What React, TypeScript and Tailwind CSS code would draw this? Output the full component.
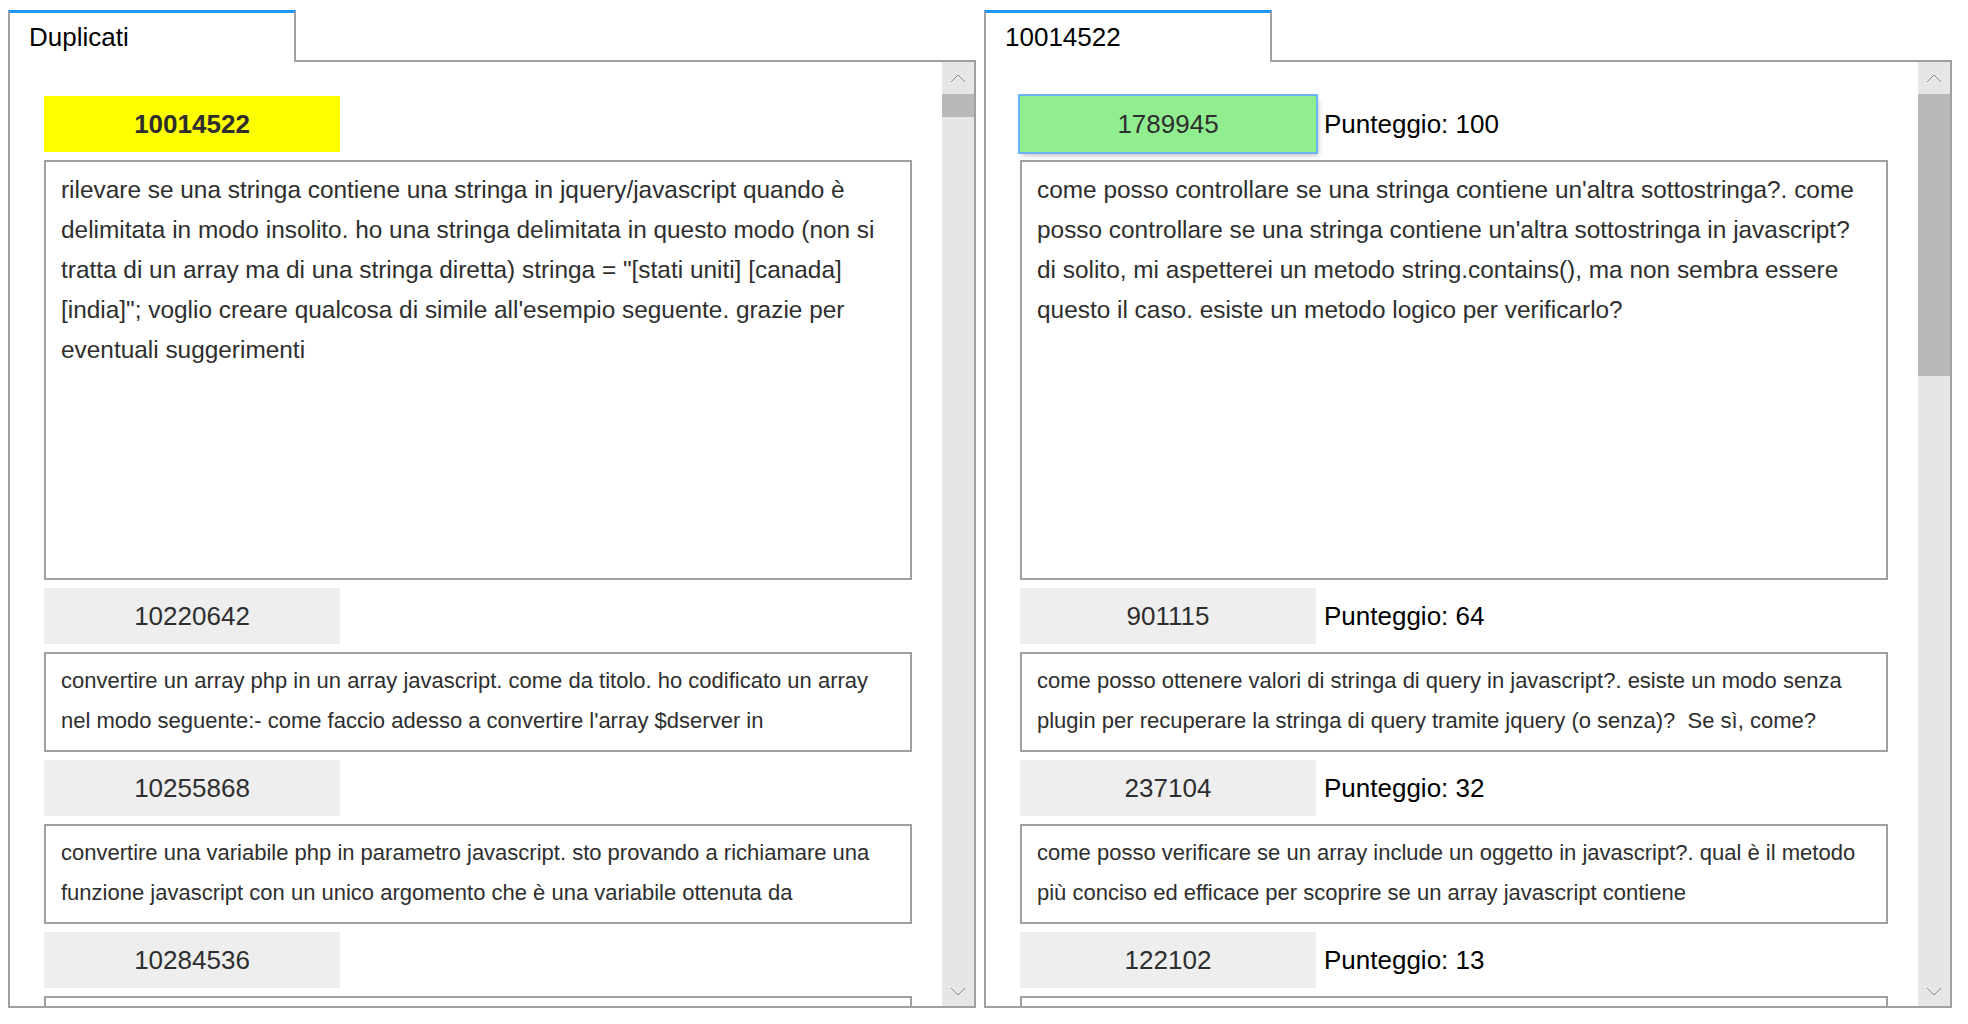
import React from "react";

type Item = {
  id: string;
  score?: number;
  lines: string[];
  big?: boolean;
  kind?: "yellow" | "green" | "plain";
};

const leftItems: Item[] = [
  {
    id: "10014522",
    kind: "yellow",
    big: true,
    lines: [
      "rilevare se una stringa contiene una stringa in jquery/javascript quando è",
      "delimitata in modo insolito. ho una stringa delimitata in questo modo (non si",
      'tratta di un array ma di una stringa diretta) stringa = "[stati uniti] [canada]',
      '[india]"; voglio creare qualcosa di simile all\'esempio seguente. grazie per',
      "eventuali suggerimenti",
    ],
  },
  {
    id: "10220642",
    lines: [
      "convertire un array php in un array javascript. come da titolo. ho codificato un array",
      "nel modo seguente:- come faccio adesso a convertire l'array $dserver in",
    ],
  },
  {
    id: "10255868",
    lines: [
      "convertire una variabile php in parametro javascript. sto provando a richiamare una",
      "funzione javascript con un unico argomento che è una variabile ottenuta da",
    ],
  },
  { id: "10284536", lines: [] },
];

const rightItems: Item[] = [
  {
    id: "1789945",
    kind: "green",
    score: 100,
    big: true,
    lines: [
      "come posso controllare se una stringa contiene un'altra sottostringa?. come",
      "posso controllare se una stringa contiene un'altra sottostringa in javascript?",
      "di solito, mi aspetterei un metodo string.contains(), ma non sembra essere",
      "questo il caso. esiste un metodo logico per verificarlo?",
    ],
  },
  {
    id: "901115",
    score: 64,
    lines: [
      "come posso ottenere valori di stringa di query in javascript?. esiste un modo senza",
      "plugin per recuperare la stringa di query tramite jquery (o senza)?  Se sì, come?",
    ],
  },
  {
    id: "237104",
    score: 32,
    lines: [
      "come posso verificare se un array include un oggetto in javascript?. qual è il metodo",
      "più conciso ed efficace per scoprire se un array javascript contiene",
    ],
  },
  { id: "122102", score: 13, lines: [] },
];

function Chevron({ up }: { up: boolean }) {
  return (
    <svg width="16" height="9" viewBox="0 0 16 9" className="block">
      <polyline
        points={up ? "1,8 8,1 15,8" : "1,1 8,8 15,1"}
        fill="none"
        stroke="#8a8a8a"
        strokeWidth="1"
      />
    </svg>
  );
}

function Scrollbar({ thumb }: { thumb: "short" | "long" }) {
  return (
    <div className="flex w-[32px] shrink-0 flex-col bg-[#e6e6e6]">
      <div className="flex h-[32px] items-center justify-center">
        <Chevron up />
      </div>
      <div className={thumb === "short" ? "h-[23px] bg-[#b9b9b9]" : "h-[282px] bg-[#b9b9b9]"} />
      <div className="flex-1" />
      <div className="flex h-[32px] items-center justify-center pt-[2px]">
        <Chevron up={false} />
      </div>
    </div>
  );
}

function IdBox({ item }: { item: Item }) {
  if (item.kind === "yellow") {
    return (
      <div className="flex h-[56px] w-[296px] shrink-0 items-center justify-center bg-[#ffff00] text-[26px] font-bold text-[#2e2e2e]">
        {item.id}
      </div>
    );
  }
  if (item.kind === "green") {
    return (
      <div className="flex h-[56px] w-[296px] shrink-0 items-center justify-center bg-[#90ee90] text-[26px] text-[#2e2e2e] shadow-[2px_3px_5px_rgba(0,0,0,0.3)] ring-2 ring-[#6cb4f5]">
        {item.id}
      </div>
    );
  }
  return (
    <div className="flex h-[56px] w-[296px] shrink-0 items-center justify-center bg-[#eeeeee] text-[26px] text-[#2e2e2e]">
      {item.id}
    </div>
  );
}

function Entry({ item }: { item: Item }) {
  return (
    <div className="flex flex-col gap-2">
      <div className="flex items-center gap-2">
        <IdBox item={item} />
        {item.score !== undefined && (
          <span className="text-[26px] text-black">Punteggio: {item.score}</span>
        )}
      </div>
      <div
        className={
          item.big
            ? "h-[420px] w-[868px] overflow-hidden border-2 border-[#a0a0a0] pl-[15px] pt-[8px] text-[24.4px] leading-[40px] text-[#2e2e2e]"
            : "h-[100px] w-[868px] overflow-hidden border-2 border-[#a0a0a0] pl-[15px] pt-[7px] text-[22px] leading-[40px] text-[#2e2e2e]"
        }
      >
        {item.lines.map((l, i) => (
          <div key={i} className="whitespace-pre">
            {l}
          </div>
        ))}
      </div>
    </div>
  );
}

function Panel({ title, items, thumb }: { title: string; items: Item[]; thumb: "short" | "long" }) {
  return (
    <div className="flex w-[968px] flex-col">
      <div className="relative z-10 flex h-[52px] w-[288px] items-center border-x-2 border-t-[3px] border-x-[#a0a0a0] border-t-[#2196f3] bg-white pb-[1px] pl-[19px] text-[26px] text-black">
        {title}
      </div>
      <div className="-mt-[2px] flex h-[948px] border-2 border-[#a0a0a0] bg-white">
        <div className="flex flex-1 flex-col gap-2 overflow-hidden pl-[34px] pt-[34px]">
          {items.map((it) => (
            <Entry key={it.id} item={it} />
          ))}
        </div>
        <Scrollbar thumb={thumb} />
      </div>
    </div>
  );
}

export default function App() {
  return (
    <div
      className="flex h-[1024px] w-[1968px] gap-2 overflow-hidden bg-white pl-2 pt-[10px]"
      style={{ fontFamily: '"Liberation Sans", Arial, sans-serif' }}
    >
      <Panel title="Duplicati" items={leftItems} thumb="short" />
      <Panel title="10014522" items={rightItems} thumb="long" />
    </div>
  );
}
